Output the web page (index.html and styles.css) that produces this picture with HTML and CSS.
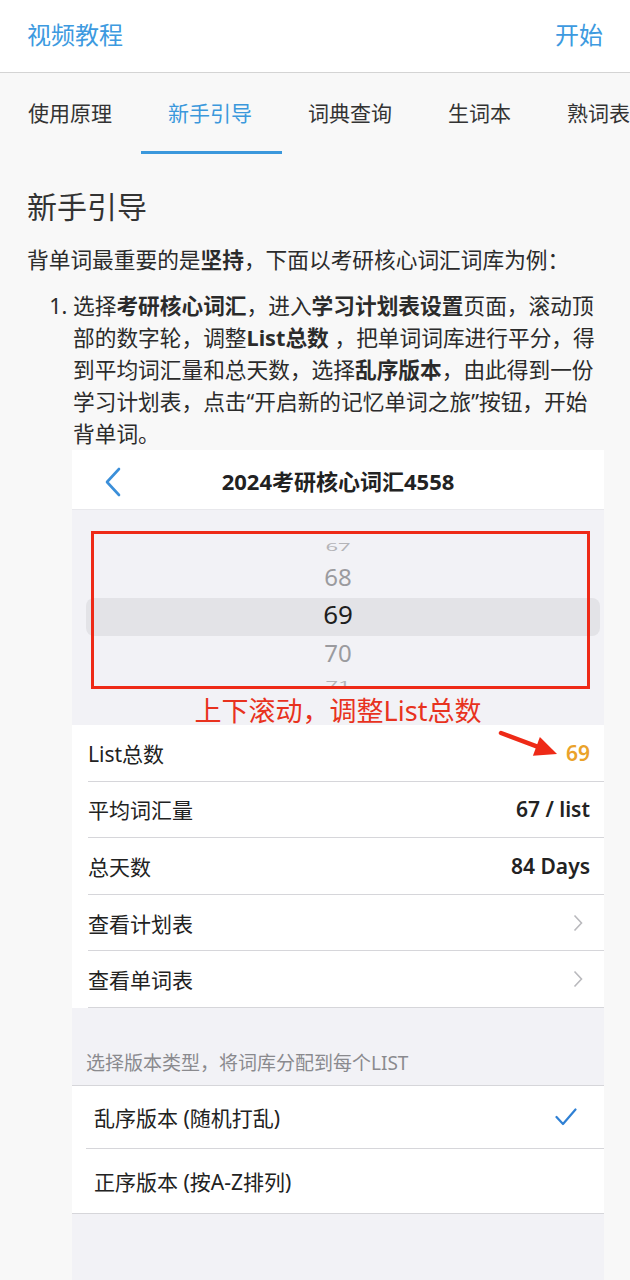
FILE: index.html
```html
<!DOCTYPE html>
<html lang="zh-CN">
<head>
    <meta charset="UTF-8">
    <meta name="viewport" content="width=device-width, initial-scale=1.0">
    <title>新手引导</title>
    <link rel="stylesheet" href="styles.css">
</head>
<body>
    <header class="topbar">
        <span class="topbar-link">视频教程</span>
        <span class="topbar-link">开始</span>
    </header>

    <nav class="tabs">
        <div class="tab">使用原理</div>
        <div class="tab active">新手引导</div>
        <div class="tab">词典查询</div>
        <div class="tab">生词本</div>
        <div class="tab">熟词表</div>
    </nav>

    <main class="guide">
        <h1>新手引导</h1>
        <p class="intro">背单词最重要的是<strong>坚持</strong>，下面以考研核心词汇词库为例：</p>

        <ol class="steps">
            <li>
                <p class="step-text">选择<strong>考研核心词汇</strong>，进入<strong>学习计划表设置</strong>页面，滚动顶部的数字轮，调整<strong>List总数</strong> ，把单词词库进行平分，得到平均词汇量和总天数，选择<strong>乱序版本</strong>，由此得到一份学习计划表，点击“开启新的记忆单词之旅”按钮，开始背单词。</p>

                <!-- screenshot of the plan settings page -->
                <div class="shot">
                    <div class="shot-nav">
                        <svg class="back" width="18" height="30" viewBox="0 0 18 30">
                            <polyline points="15,2 3,15 15,28" fill="none" stroke="#3b8fd9" stroke-width="2.6" stroke-linecap="round" stroke-linejoin="round"/>
                        </svg>
                        <span class="shot-title">2024考研核心词汇4558</span>
                    </div>

                    <div class="picker-area">
                        <div class="wheel">
                            <div class="wheel-item far">67</div>
                            <div class="wheel-item near">68</div>
                            <div class="wheel-item selected">69</div>
                            <div class="wheel-item near">70</div>
                            <div class="wheel-item far">71</div>
                        </div>
                        <div class="mark-box"></div>
                        <div class="mark-caption">上下滚动，调整List总数</div>
                    </div>

                    <div class="group">
                        <div class="row">
                            <span>List总数</span>
                            <span class="row-value orange">69</span>
                        </div>
                        <div class="row">
                            <span>平均词汇量</span>
                            <span class="row-value">67 / list</span>
                        </div>
                        <div class="row">
                            <span>总天数</span>
                            <span class="row-value">84 Days</span>
                        </div>
                        <div class="row link">
                            <span>查看计划表</span>
                            <svg class="chevron" width="10" height="18" viewBox="0 0 10 18">
                                <polyline points="1.5,1.5 8.5,9 1.5,16.5" fill="none" stroke="#b9b9bd" stroke-width="1.6"/>
                            </svg>
                        </div>
                        <div class="row link">
                            <span>查看单词表</span>
                            <svg class="chevron" width="10" height="18" viewBox="0 0 10 18">
                                <polyline points="1.5,1.5 8.5,9 1.5,16.5" fill="none" stroke="#b9b9bd" stroke-width="1.6"/>
                            </svg>
                        </div>

                        <svg class="mark-arrow" width="70" height="40" viewBox="0 0 70 40">
                            <line x1="9" y1="8" x2="46" y2="21.8" stroke="#ee2a17" stroke-width="4.5" stroke-linecap="round"/>
                            <polygon points="65,29 40.9,30.7 47.9,11.9" fill="#ee2a17"/>
                        </svg>
                    </div>

                    <div class="group-label">选择版本类型，将词库分配到每个LIST</div>

                    <div class="group bordered">
                        <div class="row choice">
                            <span>乱序版本 (随机打乱)</span>
                            <svg class="check" width="22" height="18" viewBox="0 0 22 18">
                                <polyline points="1.5,9 8,16 20.5,1.5" fill="none" stroke="#2f80d4" stroke-width="2.2" stroke-linecap="round" stroke-linejoin="round"/>
                            </svg>
                        </div>
                        <div class="row choice">
                            <span>正序版本 (按A-Z排列)</span>
                        </div>
                    </div>
                </div>
            </li>
        </ol>
    </main>
</body>
</html>
```

FILE: styles.css
```css
body {
    margin: 0;
    height: 1280px;
    overflow: hidden;
    background: #f8f8f8;
    color: #2b2b2b;
    font-family: "Noto Sans", "Noto Sans CJK SC", sans-serif;
}

.topbar {
    height: 73px;
    padding: 0 27px 6px;
    background: #fff;
    border-bottom: 1px solid #d4d4d4;
    display: flex;
    align-items: center;
    justify-content: space-between;
    box-sizing: border-box;
}

.topbar-link {
    color: #3d9ae0;
    font-size: 24px;
}

.tabs {
    display: flex;
    height: 82px;
    overflow: hidden;
}

.tab {
    flex-shrink: 0;
    padding: 0 28px 5px;
    display: flex;
    align-items: center;
    font-size: 21px;
    color: #333;
    position: relative;
}

.tab.active {
    color: #3b98dc;
}

.tab.active::after {
    content: "";
    position: absolute;
    left: 1px;
    right: -2px;
    bottom: 1px;
    height: 3px;
    background: #3b98dc;
}

.guide {
    padding: 0 26px 0 27px;
}

.guide h1 {
    margin: 32px 0 0;
    font-size: 30px;
    font-weight: 400;
    line-height: 40px;
    color: #333;
}

.intro {
    margin: 17px 0 0;
    font-size: 21.7px;
    line-height: 32px;
}

.steps {
    margin: 14px 0 0;
    padding-left: 46px;
    font-size: 21.7px;
    line-height: 32px;
}

.step-text {
    margin: 0;
    padding-right: 4px;
}

/* embedded screenshot */
.shot {
    margin-left: -1px;
    background: #f2f2f6;
    padding-bottom: 120px;
    line-height: normal;
}

.shot-nav {
    height: 60px;
    background: #fff;
    border-bottom: 1px solid #e8e8ec;
    box-sizing: border-box;
    display: flex;
    align-items: center;
    justify-content: center;
    position: relative;
}

.back {
    position: absolute;
    left: 32px;
    top: 17px;
}

.shot-title {
    font-size: 22px;
    font-weight: 700;
    color: #222;
}

.picker-area {
    position: relative;
    height: 215px;
    padding-top: 24px;
    box-sizing: border-box;
}

.wheel {
    height: 152px;
    margin: 0 4px 11px 14px;
    overflow: hidden;
    display: flex;
    flex-direction: column;
}

.wheel-item {
    text-align: center;
    padding-right: 10px;
    font-family: "Noto Sans", sans-serif;
    flex-shrink: 0;
}

.wheel-item.far {
    height: 26px;
    line-height: 24px;
    font-size: 22px;
    color: #b4b4b8;
    transform: scaleY(0.5);
}

.wheel-item.near {
    height: 38px;
    line-height: 33px;
    font-size: 24px;
    color: #9b9b9f;
}

.wheel-item.selected + .near {
    height: 36px;
}

.wheel-item.selected {
    height: 38px;
    line-height: 33px;
    font-size: 26px;
    color: #1e1e1e;
    background: #e3e3e7;
    border-radius: 8px;
}

.mark-box {
    position: absolute;
    top: 21px;
    left: 19px;
    width: 499px;
    height: 158px;
    border: 3px solid #ee2a17;
    box-sizing: border-box;
}

.mark-caption {
    height: 28px;
    line-height: 28px;
    text-align: center;
    font-size: 27px;
    color: #e8321e;
}

.group {
    background: #fff;
    position: relative;
}

.group.bordered {
    border-top: 1px solid #d6d6da;
    border-bottom: 1px solid #d6d6da;
}

.row {
    display: flex;
    align-items: center;
    justify-content: space-between;
    height: 56.6px;
    margin-left: 16px;
    padding-right: 14px;
    border-bottom: 1px solid #d6d6da;
    box-sizing: border-box;
    font-size: 21px;
    color: #222;
}

.row.link {
    padding-right: 21px;
}

.row-value {
    font-weight: 600;
}

.row-value.orange {
    color: #eaa22a;
}

.row.choice {
    height: 63.5px;
    margin-left: 14px;
    padding-left: 8px;
    padding-right: 27px;
}

.row.choice:last-child {
    border-bottom: none;
}

.mark-arrow {
    position: absolute;
    left: 420px;
    top: 0;
}

.group-label {
    padding: 44px 0 10px 14px;
    font-size: 19px;
    line-height: 23px;
    color: #8a8a8e;
}
```
